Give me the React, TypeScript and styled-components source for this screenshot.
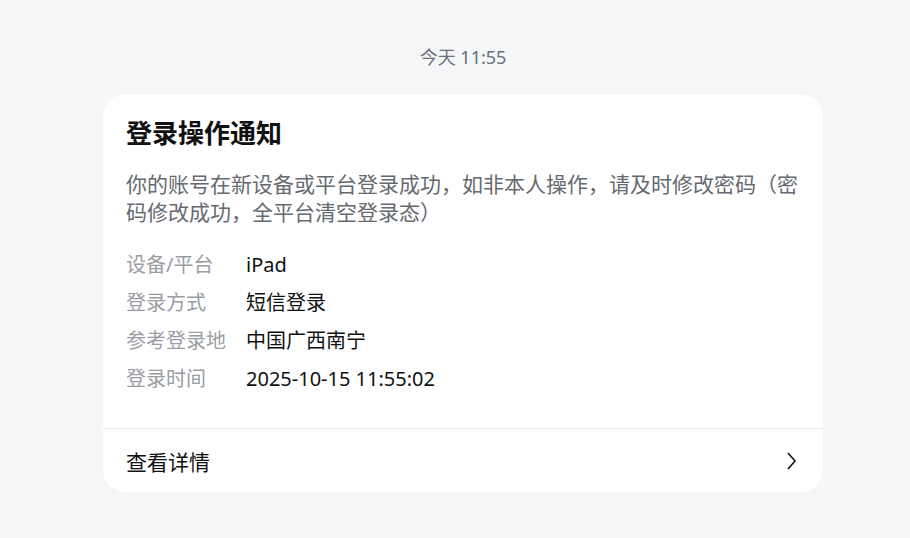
import React from "react";
import styled, { createGlobalStyle } from "styled-components";

const Global = createGlobalStyle`
  html, body { margin: 0; padding: 0; background: #f5f6f8; }
  body { font-family: "Noto Sans", "Noto Sans CJK SC", sans-serif; }
`;

const Page = styled.div`
  display: flex;
  flex-direction: column;
  align-items: center;
  padding: 44px 0 0 16px;
  min-height: 538px;
  box-sizing: border-box;
`;

const Time = styled.div`
  font-size: 18px;
  line-height: 26px;
  color: #6b6f76;
`;

const Card = styled.div`
  margin-top: 24px;
  width: 720px;
  background: #fff;
  border-radius: 22px;
  overflow: hidden;
`;

const Body = styled.div`
  padding: 21px 23px 30px 23px;
`;

const Title = styled.div`
  font-size: 26px;
  font-weight: 700;
  line-height: 36px;
  color: #111;
`;

const Desc = styled.div`
  margin-top: 19px;
  font-size: 21px;
  line-height: 28px;
  color: #666a70;
`;

const Rows = styled.div`
  margin-top: 20px;
  display: flex;
  flex-direction: column;
`;

const Row = styled.div`
  display: grid;
  grid-template-columns: 120px 1fr;
  font-size: 20px;
  line-height: 38px;
`;

const Label = styled.span`
  color: #9a9da3;
`;

const Value = styled.span`
  color: #111;
`;

const Footer = styled.div`
  border-top: 1px solid #e6e6e6;
  height: 63px;
  display: flex;
  align-items: center;
  justify-content: space-between;
  padding: 0 26px 0 23px;
  font-size: 21px;
  color: #111;
`;

const rows: [string, string][] = [
  ["设备/平台", "iPad"],
  ["登录方式", "短信登录"],
  ["参考登录地", "中国广西南宁"],
  ["登录时间", "2025-10-15 11:55:02"],
];

export default function App() {
  return (
    <>
      <Global />
      <Page>
        <Time>今天 11:55</Time>
        <Card>
          <Body>
            <Title>登录操作通知</Title>
            <Desc>
              你的账号在新设备或平台登录成功，如非本人操作，请及时修改密码（密码修改成功，全平台清空登录态）
            </Desc>
            <Rows>
              {rows.map(([l, v]) => (
                <Row key={l}>
                  <Label>{l}</Label>
                  <Value>{v}</Value>
                </Row>
              ))}
            </Rows>
          </Body>
          <Footer>
            <span>查看详情</span>
            <svg width="12" height="20" viewBox="0 0 12 20" fill="none">
              <polyline points="3,2 10,10 3,18" stroke="#111" strokeWidth="1.6" strokeLinejoin="miter" />
            </svg>
          </Footer>
        </Card>
      </Page>
    </>
  );
}
